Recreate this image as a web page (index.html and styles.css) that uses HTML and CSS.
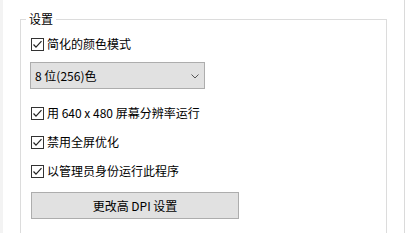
FILE: index.html
```html
<!DOCTYPE html>
<html lang="zh-CN">
<head>
    <meta charset="UTF-8">
    <title>兼容性设置</title>
    <link rel="stylesheet" href="styles.css">
</head>
<body>
    <div class="page">
        <fieldset class="group">
            <legend class="group-title">设置</legend>

            <label class="check">
                <span class="box"><svg viewBox="0 0 13 13" width="13" height="13"><path d="M2.5 6.5 L5 9.2 L10.5 3.2" fill="none" stroke="#222" stroke-width="1.2"/></svg></span>
                <span>简化的颜色模式</span>
            </label>

            <div class="select">
                <span>8 位(256)色</span>
                <svg class="chevron" viewBox="0 0 8 5" width="8" height="5"><path d="M0.5 0.5 L4 4 L7.5 0.5" fill="none" stroke="#555" stroke-width="1"/></svg>
            </div>

            <label class="check check-640">
                <span class="box"><svg viewBox="0 0 13 13" width="13" height="13"><path d="M2.5 6.5 L5 9.2 L10.5 3.2" fill="none" stroke="#222" stroke-width="1.2"/></svg></span>
                <span>用 640 x 480 屏幕分辨率运行</span>
            </label>

            <label class="check check-gap">
                <span class="box"><svg viewBox="0 0 13 13" width="13" height="13"><path d="M2.5 6.5 L5 9.2 L10.5 3.2" fill="none" stroke="#222" stroke-width="1.2"/></svg></span>
                <span>禁用全屏优化</span>
            </label>

            <label class="check check-gap">
                <span class="box"><svg viewBox="0 0 13 13" width="13" height="13"><path d="M2.5 6.5 L5 9.2 L10.5 3.2" fill="none" stroke="#222" stroke-width="1.2"/></svg></span>
                <span>以管理员身份运行此程序</span>
            </label>

            <button class="dpi-btn">更改高 DPI 设置</button>
        </fieldset>
    </div>
</body>
</html>
```

FILE: styles.css
```css
body {
    margin: 0;
    background: #ffffff;
    color: #000000;
    font-family: "Noto Sans CJK SC", "Noto Sans", sans-serif;
    font-size: 12px;
    overflow: hidden;
}

.page {
    width: 405px;
    height: 233px;
    overflow: hidden;
    border-left: 3px solid #f3f3f3;
    border-right: 1px solid #dadada;
    padding: 11px 0 0 17px;
    box-sizing: border-box;
}

.group {
    margin: 0;
    width: 367px;
    height: 240px;
    box-sizing: border-box;
    border: 1px solid #dcdcdc;
    padding: 9px 10px 0 10px;
    display: flex;
    flex-direction: column;
    align-items: flex-start;
}

.group-title {
    padding: 0 3px;
    margin-left: -5px;
    line-height: 16px;
}

.check {
    display: flex;
    align-items: center;
    gap: 3px;
    height: 16px;
    line-height: 16px;
}

.box {
    width: 13px;
    height: 13px;
    box-sizing: border-box;
    border: 1px solid #333333;
    display: flex;
}

.box svg {
    margin: -1px;
}

.select {
    margin: 10px 0 0 -1px;
    width: 175px;
    height: 27px;
    box-sizing: border-box;
    border: 1px solid #adadad;
    background: #e1e1e1;
    display: flex;
    align-items: center;
    justify-content: space-between;
    padding: 0 5px 0 4px;
}

.chevron {
    margin-top: 1px;
}

.check-640 {
    margin-top: 16px;
}

.check-gap {
    margin-top: 13px;
}

.dpi-btn {
    margin-top: 13px;
    width: 208px;
    height: 27px;
    border: 1px solid #adadad;
    background: #e1e1e1;
    font-family: inherit;
    font-size: 12px;
    color: #000000;
    padding: 0;
}
```
